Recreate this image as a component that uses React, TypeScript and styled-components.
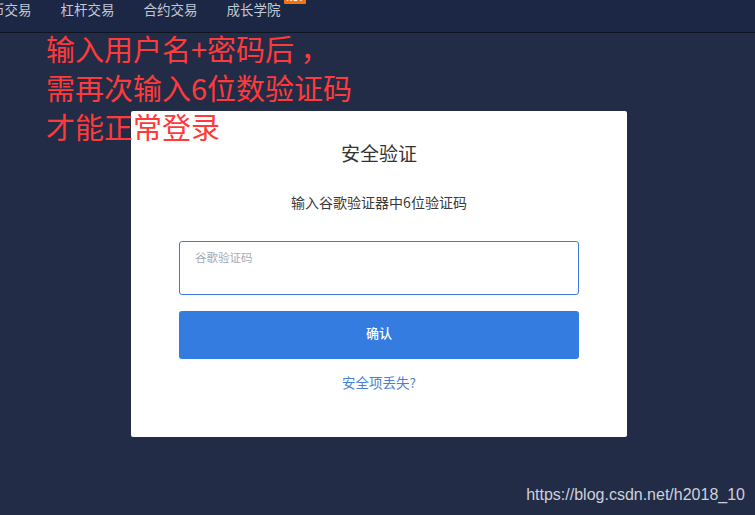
import React from "react";
import styled, { createGlobalStyle } from "styled-components";

const Global = createGlobalStyle`
  html, body { margin: 0; padding: 0; background: #232c47; }
  body { font-family: "Noto Sans CJK SC", "Noto Sans", sans-serif; }
`;

const Page = styled.div`
  position: relative;
  width: 755px;
  height: 515px;
  overflow: hidden;
  background: #232c47;
  display: flex;
  flex-direction: column;
`;

const Header = styled.header`
  height: 32px;
  flex: none;
  background: #1b2745;
  border-bottom: 1px solid #0f1423;
  display: flex;
  align-items: flex-start;
  gap: 29px;
  margin-left: -9px;
`;

const NavItem = styled.a`
  position: relative;
  font-size: 13.5px;
  line-height: 18px;
  color: #c3c9d6;
  text-decoration: none;
  white-space: nowrap;
`;

const HotBadge = styled.span`
  position: absolute;
  left: 57px;
  top: -7px;
  background: #f2740c;
  color: #fff;
  font-family: "Liberation Sans", Arial, sans-serif;
  font-size: 8px;
  font-weight: bold;
  line-height: 11px;
  padding: 0 3px;
  border-radius: 1px;
`;

const Main = styled.main`
  flex: 1;
  padding: 78px 0 0 131px;
`;

const Card = styled.section`
  width: 496px;
  box-sizing: border-box;
  background: #fff;
  border-radius: 2px;
  padding: 30px 48px 45px;
  display: flex;
  flex-direction: column;
  align-items: stretch;
`;

const Title = styled.h2`
  margin: 0;
  text-align: center;
  font-size: 19px;
  font-weight: normal;
  line-height: 24px;
  color: #333;
`;

const Subtitle = styled.p`
  margin: 27px 0 0;
  text-align: center;
  font-size: 14px;
  line-height: 20px;
  color: #3a3a3a;
`;

const InputBox = styled.div`
  margin-top: 29px;
  height: 54px;
  box-sizing: border-box;
  border: 1px solid #3b7ddd;
  border-radius: 3px;
  padding: 7px 15px 0;
`;

const Placeholder = styled.span`
  display: block;
  font-size: 11.5px;
  line-height: 16px;
  color: #a6abb8;
`;

const Button = styled.button`
  margin-top: 16px;
  height: 48px;
  border: none;
  border-radius: 3px;
  background: #357ce1;
  color: #fff;
  font-family: inherit;
  font-size: 13px;
  font-weight: 500;
  line-height: 44px;
  padding: 0 0 4px;
  cursor: pointer;
`;

const Link = styled.a`
  margin-top: 13px;
  text-align: center;
  font-size: 13.5px;
  line-height: 20px;
  color: #4a7fd6;
  text-decoration: none;
`;

const Annotation = styled.div`
  position: absolute;
  left: 46px;
  top: 29px;
  font-size: 29px;
  line-height: 39px;
  color: #ff3a3a;
  white-space: pre;
`;

const Watermark = styled.div`
  position: absolute;
  right: 10px;
  bottom: 11px;
  font-family: "Liberation Sans", Arial, sans-serif;
  font-size: 16px;
  line-height: 18px;
  color: #cdd1da;
`;

export default function App() {
  return (
    <>
      <Global />
      <Page>
        <Header>
          <NavItem>币交易</NavItem>
          <NavItem>杠杆交易</NavItem>
          <NavItem>合约交易</NavItem>
          <NavItem>
            成长学院
            <HotBadge>HOT</HotBadge>
          </NavItem>
        </Header>
        <Main>
          <Card>
            <Title>安全验证</Title>
            <Subtitle>输入谷歌验证器中6位验证码</Subtitle>
            <InputBox>
              <Placeholder>谷歌验证码</Placeholder>
            </InputBox>
            <Button>确认</Button>
            <Link>安全项丢失?</Link>
          </Card>
        </Main>
        <Annotation>
          {"输入用户名+密码后 ，\n需再次输入6位数验证码\n才能正常登录"}
        </Annotation>
        <Watermark>https://blog.csdn.net/h2018_10</Watermark>
      </Page>
    </>
  );
}
